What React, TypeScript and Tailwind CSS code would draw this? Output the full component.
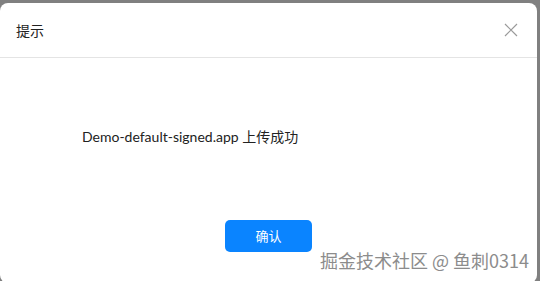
import React from 'react';

const font = { fontFamily: '"Noto Sans CJK SC", "Noto Sans", sans-serif' };
const bodyFont = { fontFamily: 'Lato, "Noto Sans CJK SC", sans-serif' };

const CloseIcon = () => (
  <svg width="14" height="14" viewBox="0 0 14 14" fill="none" stroke="#9a9a9a" strokeWidth="1.2">
    <path d="M1 1L13 13M13 1L1 13" />
  </svg>
);

const App = () => {
  return (
    <div className="relative w-[540px] h-[281px] overflow-hidden bg-[#808080]" style={font}>
      <div className="mt-[3px] mr-[3px] h-[280px] rounded-lg bg-white flex flex-col">
        <div className="h-[55px] flex items-center justify-between pl-4 pr-[19px] border-b border-[#e4e4e4]">
          <span className="text-[14px] text-[#222]">提示</span>
          <CloseIcon />
        </div>
        <div className="pl-[82px] pt-[69px] text-[14px] text-[#222] leading-5" style={bodyFont}>
          Demo-default-signed.app 上传成功
        </div>
        <div className="flex justify-center pt-[73px]">
          <button
            type="button"
            className="w-[87px] h-[32px] rounded-[5px] bg-[#0a84ff] text-white text-[13px]"
          >
            确认
          </button>
        </div>
      </div>
      <div
        className="absolute left-[320px] top-[247px] text-[18px] text-[#8c8c8c] whitespace-nowrap"
        style={{ textShadow: '0 0 2px #fff' }}
      >
        掘金技术社区 @ 鱼刺0314
      </div>
    </div>
  );
};

export default App;
